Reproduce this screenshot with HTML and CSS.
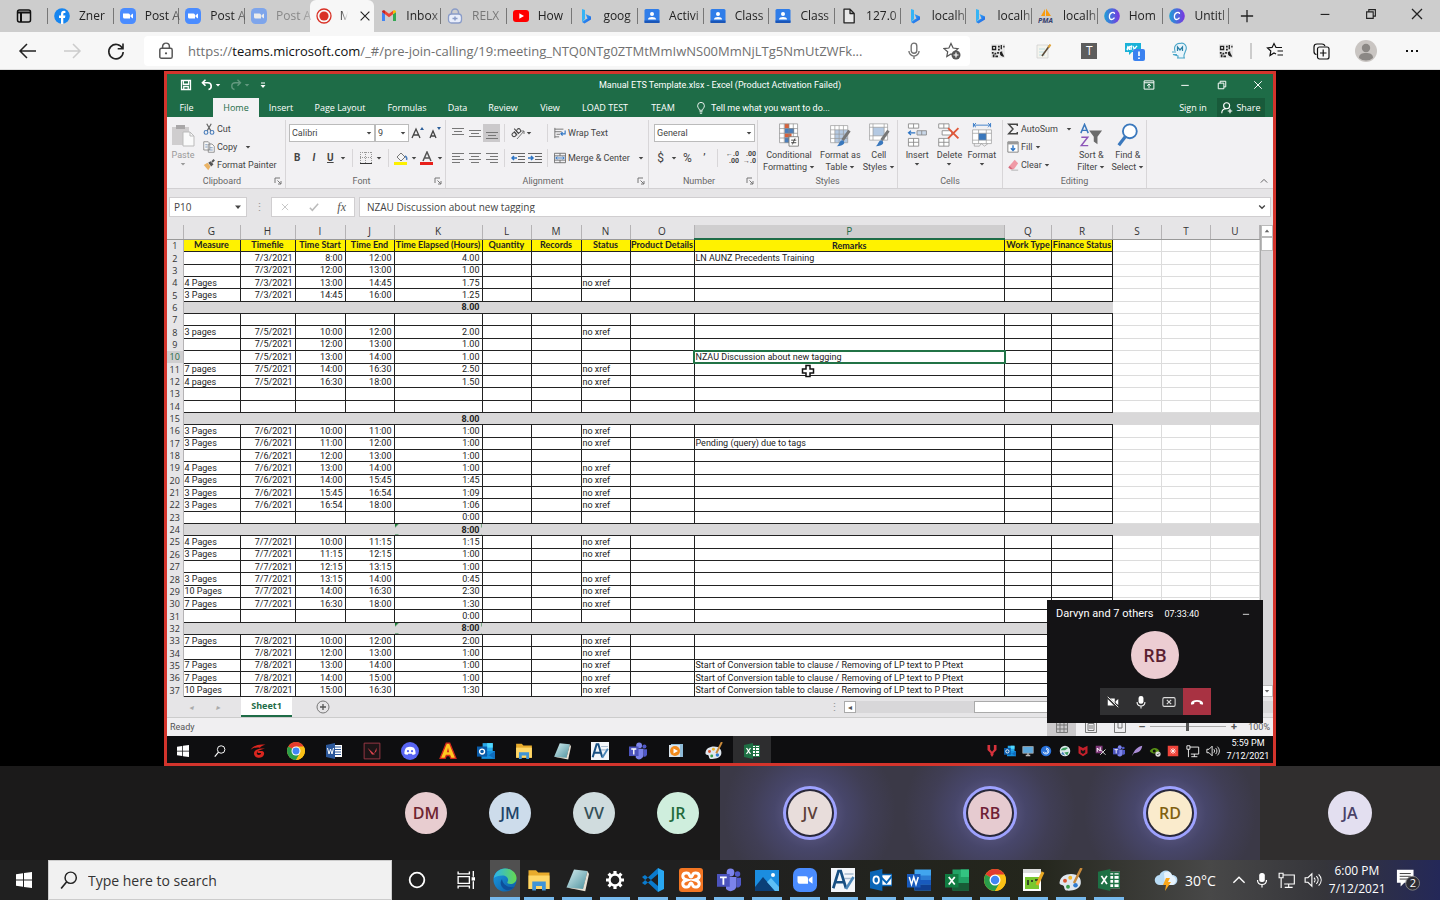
FILE: index.html
```html
<!DOCTYPE html>
<html lang="en">
<head>
<meta charset="utf-8">
<title>Meeting</title>
<link rel="stylesheet" href="styles.css">
</head>
<body>
<svg class="defs" aria-hidden="true">
  <defs>
    <linearGradient id="gEdge" x1="0" y1="0" x2="1" y2="1"><stop offset="0" stop-color="#1b9de2"/><stop offset="1" stop-color="#0c59a4"/></linearGradient>
    <linearGradient id="gEdge2" x1="0" y1="0" x2="1" y2="0"><stop offset="0" stop-color="#2bb3ee"/><stop offset="1" stop-color="#66d94e"/></linearGradient>
    <linearGradient id="gCanva" x1="0" y1="0" x2="1" y2="0"><stop offset="0" stop-color="#1f9fd6"/><stop offset="1" stop-color="#7a35e0"/></linearGradient>
    <linearGradient id="gBing" x1="0" y1="0" x2="1" y2="1"><stop offset="0" stop-color="#37bdff"/><stop offset="1" stop-color="#1b55e0"/></linearGradient>
    <linearGradient id="gPad" x1="0" y1="0" x2="1" y2="1"><stop offset="0" stop-color="#d8f0f2"/><stop offset="1" stop-color="#4a8f9c"/></linearGradient>
  </defs>
  <symbol id="tabpanel" viewBox="0 0 16 16"><rect x="1.5" y="2" width="13" height="12" rx="2" fill="none" stroke="#111" stroke-width="1.5"/><path d="M1.500 4.500h13M5 4.500V14" stroke="#111" stroke-width="2"/></symbol>
  <symbol id="fb" viewBox="0 0 16 16"><circle cx="8" cy="8" r="7.800" fill="#1685f0"/><path d="M7 16V10H5V7.600h2V6c0-2.200 1.200-3.200 3-3.200l1.400.1v2.200h-1c-.9 0-1.100.4-1.100 1.100v1.400h2.100L11 10H9.300v6z" fill="#fff"/></symbol>
  <symbol id="zoom" viewBox="0 0 16 16"><rect width="16" height="16" rx="4.500" fill="#4a8cff"/><path d="M3 5.500h5.500a1.500 1.500 0 0 1 1.500 1.500v3.500H4.500A1.500 1.500 0 0 1 3 9zM10.500 7.300 13 5.500v5l-2.500-1.800z" fill="#fff"/></symbol>
  <symbol id="rec" viewBox="0 0 16 16"><circle cx="8" cy="8" r="7" fill="none" stroke="#d93025" stroke-width="1.300"/><circle cx="8" cy="8" r="4.600" fill="#d93025"/></symbol>
  <symbol id="gmail" viewBox="0 0 16 16"><path d="M1 13V4l3 2.200V13z" fill="#4285f4"/><path d="M12 13V6.200L15 4v9z" fill="#34a853"/><path d="M4 6.200 8 9.200l4-3v-3.500L8 5.700 4 2.700z" fill="#ea4335"/><path d="M1 4c0-1.800 1.800-2.200 3-1.300v3.500z" fill="#c5221f"/><path d="M15 4c0-1.800-1.800-2.200-3-1.300v3.500z" fill="#fbbc04"/></symbol>
  <symbol id="relx" viewBox="0 0 16 16"><rect x="1.500" y="6" width="13" height="9" rx="3" fill="#e9eefb" stroke="#8a9cc8" stroke-width="1.300"/><path d="M4.500 6V4.500a3.500 3.500 0 0 1 7 0V6" fill="none" stroke="#8a9cc8" stroke-width="1.500"/><path d="M8 8.500v4M5.500 10.500h5" stroke="#8a9cc8" stroke-width="1.500"/></symbol>
  <symbol id="yt" viewBox="0 0 16 16"><rect y="2" width="16" height="12" rx="3" fill="#f00"/><path d="M6.300 5.200v5.600L11 8z" fill="#fff"/></symbol>
  <symbol id="bing" viewBox="0 0 16 16"><path d="M4 1l3 1v9l-3 3z" fill="#35b4f5"/><path d="M7.500 6 13 8.500v3L6.500 15.500 4 14l3.500-2.500 2-1z" fill="url(#gBing)"/></symbol>
  <symbol id="gclass" viewBox="0 0 16 16"><rect x=".5" y="1" width="15" height="14" rx="1.500" fill="#2f7de9"/><path d="M.5 12.500h15V15H.5z" fill="#1a56b8"/><circle cx="8" cy="6" r="2" fill="#fff"/><path d="M4 11.500c0-2 2-2.600 4-2.600s4 .6 4 2.600z" fill="#fff"/></symbol>
  <symbol id="page" viewBox="0 0 16 16"><path d="M3 1.200h6l4.200 4.200v9.400H3zM9 1.200v4.300h4.200" fill="#e8e8e8" stroke="#222" stroke-width="1.300" stroke-linejoin="round"/></symbol>
  <symbol id="canva" viewBox="0 0 16 16"><circle cx="8" cy="8" r="7.800" fill="url(#gCanva)"/><path d="M10.500 6c0-1.200-1-1.900-2.200-1.500C6.500 5 5.300 7 5.400 9c.1 1.600 1 2.500 2.200 2.500 1.300 0 2.200-.8 2.900-1.800" fill="none" stroke="#fff" stroke-width="1.300"/></symbol>
  <symbol id="x" viewBox="0 0 16 16"><path d="M3 3l10 10M13 3 3 13" stroke="currentColor" stroke-width="1.300" fill="none"/></symbol>
  <symbol id="plus" viewBox="0 0 16 16"><path d="M8 1v14M1 8h14" stroke="currentColor" stroke-width="1.500"/></symbol>
  <symbol id="min" viewBox="0 0 16 16"><path d="M3 8.500h10" stroke="currentColor" stroke-width="1.300"/></symbol>
  <symbol id="max" viewBox="0 0 16 16"><path d="M3 5.500h7.500V13H3zM5.500 5.500V3H13v7.500h-2.500" fill="none" stroke="currentColor" stroke-width="1.300"/></symbol>
  <symbol id="back" viewBox="0 0 20 20"><path d="M9 3 2 10l7 7M2 10h16" fill="none" stroke="currentColor" stroke-width="1.500"/></symbol>
  <symbol id="fwd" viewBox="0 0 20 20"><path d="m11 3 7 7-7 7M18 10H2" fill="none" stroke="currentColor" stroke-width="1.500"/></symbol>
  <symbol id="reload" viewBox="0 0 20 20"><path d="M16.500 7.500a7.200 7.200 0 1 0 .7 3.500M17 2.500v5.300h-5.300" fill="none" stroke="#222" stroke-width="1.600"/></symbol>
  <symbol id="lock" viewBox="0 0 16 16"><rect x="2.500" y="5.500" width="11" height="9" rx="1.500" fill="none" stroke="#555" stroke-width="1.300"/><path d="M5 5.500V4a3 3 0 0 1 6 0v1.500" fill="none" stroke="#555" stroke-width="1.300"/><circle cx="8" cy="10" r="1" fill="#555"/></symbol>
  <symbol id="mic" viewBox="0 0 16 16"><rect x="5.500" y="1" width="5" height="9" rx="2.500" fill="none" stroke="currentColor" stroke-width="1.200"/><path d="M3.500 8a4.500 4.500 0 0 0 9 0M8 12.500V15" fill="none" stroke="currentColor" stroke-width="1.200"/></symbol>
  <symbol id="staradd" viewBox="0 0 18 18"><path d="m8 1.500 2.100 4.500 4.900.6-3.600 3.300L12 14 8 12l-4.200 2.500.9-4.800L1 6.600l4.900-.6z" fill="none" stroke="#555" stroke-width="1.200"/><circle cx="13" cy="13" r="4.500" fill="#555"/><path d="M13 10.500v5M10.500 13h5" stroke="#fff" stroke-width="1.200"/></symbol>
  <symbol id="qr" viewBox="0 0 16 16"><rect width="16" height="16" fill="#e9e9e9"/><path d="M1 2h5v5H1zM8 2h2v2H8zM11 1h1.500v5H11zM14 2h1.500v2H14zM8 5.500h2v2H8zM1 9h2v2H1zM4 10h2v2H4zM2 12h2v3H2zM5 13h3v2H5zM7 9h2v2H7z" fill="#222"/><path d="M2.500 3.500h2v2h-2z" fill="#eee"/><path d="M10 10c0 3 2 4.500 5 4.500 0-2-3-4.500-2-6-1.500 0-3 .5-3 1.500z" fill="#222"/></symbol>
  <symbol id="note" viewBox="0 0 16 16"><path d="M1 2h11v13H1z" fill="#f4f4ee" stroke="#ccc" stroke-width=".7"/><path d="M3 6h6M3 9h5M3 12h6" stroke="#b5dbe0" stroke-width=".9"/><path d="m14 2-8 11" stroke="#5b4b3a" stroke-width="1.600"/><path d="m14.500 1.500-2 3" stroke="#e3a53a" stroke-width="2"/></symbol>
  <symbol id="mask" viewBox="0 0 18 18"><path d="M4 9C2 3 7 1 9 1.500 13 0 17 4 14.500 9L13 13v3H7v-2L2 12.500h4M1 10h4M6 16h8" fill="#e9f5fb" stroke="#4ba6c9" stroke-width="1.100"/><path d="M6.500 9V5l2.500 3 2.500-3v4" fill="none" stroke="#2b7fa6" stroke-width="1.200"/></symbol>
  <symbol id="favs" viewBox="0 0 18 18"><path d="M10 12 8 11l-4 2.500.8-4.500L1.500 6l4.600-.6L8 1.500l2 4h6M11.500 9H17M11.500 13H17" fill="none" stroke="#111" stroke-width="1.200"/></symbol>
  <symbol id="coll" viewBox="0 0 18 18"><path d="M4.500 12.500A3 3 0 0 1 2 9.500V5c0-2 1-3 3-3h5c1.500 0 2.500.7 3 2" fill="none" stroke="#111" stroke-width="1.200"/><rect x="5.500" y="5" width="11.500" height="12" rx="2" fill="none" stroke="#111" stroke-width="1.200"/><path d="M11.200 7.500v7M8 11h6.500" stroke="#111" stroke-width="1.200"/></symbol>
  <symbol id="user" viewBox="0 0 22 22"><circle cx="11" cy="11" r="11" fill="#c9c5c2"/><circle cx="11" cy="8" r="4.200" fill="#8b8885"/><path d="M4 18c0-4 3-5 7-5s7 1 7 5a11 11 0 0 1-14 0z" fill="#8b8885"/></symbol>
  <symbol id="dots" viewBox="0 0 16 16"><path d="M2 8h2M7 8h2M12 8h2" stroke="#111" stroke-width="2"/></symbol>
  <symbol id="save" viewBox="0 0 16 16"><path d="M2 2h12v12H2zM4.500 2v5h7V2M5 14v-4h6v4" fill="none" stroke="#fff" stroke-width="1.700"/></symbol>
  <symbol id="undo" viewBox="0 0 16 16"><path d="M6 1 2 5l4 4M2.500 5H9c6 0 6 8 1 9" fill="none" stroke="currentColor" stroke-width="2.200"/></symbol>
  <symbol id="redo" viewBox="0 0 16 16"><path d="m10 1 4 4-4 4M13.500 5H7c-6 0-6 8-1 9" fill="none" stroke="currentColor" stroke-width="1.800"/></symbol>
  <symbol id="qat" viewBox="0 0 8 8"><path d="M2 2h4" stroke="#fff"/><path d="M1.500 4h5L4 7z" fill="#fff"/></symbol>
  <symbol id="caret" viewBox="0 0 8 8"><path d="M1 2.500h6L4 6z" fill="currentColor"/></symbol>
  <symbol id="ropt" viewBox="0 0 16 16"><path d="M1.500 2.500h13v11h-13zM1.500 5h13M8 12V7M5.500 9 8 6.700 10.500 9" fill="none" stroke="currentColor" stroke-width="1.300"/></symbol>
  <symbol id="bulb" viewBox="0 0 16 16"><path d="M6 11C6 9 3.500 8 3.500 5a4.500 4.500 0 0 1 9 0c0 3-2.500 4-2.500 6zM6 13h4M6.500 15h3" fill="none" stroke="#fff" stroke-width="1.200"/></symbol>
  <symbol id="share" viewBox="0 0 16 16"><circle cx="7.500" cy="5" r="4" fill="none" stroke="#fff" stroke-width="1.500"/><path d="M1 15c0-4 3-6 6-6M12 9v6M9 12h6" fill="none" stroke="#fff" stroke-width="1.500"/></symbol>
  <symbol id="paste" viewBox="0 0 24 24"><path d="M1 4h17v18H1z" fill="#cfcdce"/><path d="M5 2h9v4H5z" fill="#a9a7a8"/><path d="M12 9h7l4 4v10H12z" fill="#fafafa" stroke="#bbb"/><path d="M19 9v4h4" fill="none" stroke="#bbb"/></symbol>
  <symbol id="cut" viewBox="0 0 16 16"><path d="m5 1 5.500 9.500M11 1 5.500 10.500" stroke="#666" stroke-width="1.600"/><circle cx="4" cy="12.500" r="2.500" fill="none" stroke="#4a7ebb" stroke-width="1.500"/><circle cx="12" cy="12.500" r="2.500" fill="none" stroke="#4a7ebb" stroke-width="1.500"/></symbol>
  <symbol id="copy" viewBox="0 0 16 16"><path d="M1 1h6l2 2v9H1zM7 4h5l3 3v8H7z" fill="#f8f8f8" stroke="#777"/><path d="M3 5h3M3 8h3M9 9h4M9 12h4" stroke="#5b7fae"/></symbol>
  <symbol id="brush" viewBox="0 0 16 16"><path d="m1 8 5-3 4 5-3 5z" fill="#eab365"/><path d="m7 5 3-2 4 4-3 3z" fill="#555"/><path d="m12 4 3-3" stroke="#555" stroke-width="2.500"/></symbol>
  <symbol id="launch" viewBox="0 0 8 8"><path d="M1 6V1h5M3.500 3.500 7 7M7 4v3H4" fill="none" stroke="#777"/></symbol>
  <symbol id="al-l" viewBox="0 0 12 12"><path d="M0 1.500h12M0 4.500h8M0 7.500h12M0 10.500h8" stroke="#777"/></symbol>
  <symbol id="al-c" viewBox="0 0 12 12"><path d="M0 1.500h12M2 4.500h8M0 7.500h12M2 10.500h8" stroke="#777"/></symbol>
  <symbol id="al-r" viewBox="0 0 12 12"><path d="M0 1.500h12M4 4.500h8M0 7.500h12M4 10.500h8" stroke="#777"/></symbol>
  <symbol id="v-t" viewBox="0 0 12 12"><path d="M0 1.500h12M2 4.500h8M0 7.500h12" stroke="#777"/></symbol>
  <symbol id="v-m" viewBox="0 0 12 12"><path d="M0 3.500h12M2 6.500h8M0 9.500h12" stroke="#777"/></symbol>
  <symbol id="v-b" viewBox="0 0 12 12"><path d="M0 5.500h12M2 8.500h8M0 11.500h12" stroke="#777"/></symbol>
  <symbol id="ind-o" viewBox="0 0 14 12"><path d="M0 1.500h14M7 4.500h7M7 7.500h7M0 10.500h14" stroke="#666"/><path d="M6 6H1M3 4 1 6l2 2" stroke="#2d74c4" stroke-width="1.500" fill="none"/></symbol>
  <symbol id="ind-i" viewBox="0 0 14 12"><path d="M0 1.500h14M7 4.500h7M7 7.500h7M0 10.500h14" stroke="#666"/><path d="M0 6h5M3 4l2 2-2 2" stroke="#2d74c4" stroke-width="1.500" fill="none"/></symbol>
  <symbol id="wrap" viewBox="0 0 14 12"><path d="M1 0v12M1 1.500h10M1 4.500h8M1 10.500h5M3 7.500h4" stroke="#666"/><path d="M13 3v4H8M10 5 8 7l2 2" fill="none" stroke="#2d74c4" stroke-width="1.300"/></symbol>
  <symbol id="merge" viewBox="0 0 14 12"><path d="M.5.500h13v11H.5zM.5 3.500h13M.5 8.500h13M7 .5v3M7 8.500v3" fill="none" stroke="#666"/><path d="M2 6h10M4 4.500 2 6l2 1.500M10 4.500 12 6l-2 1.500" fill="none" stroke="#2d74c4"/></symbol>
  <symbol id="borders" viewBox="0 0 12 12"><path d="M0 .5h12M0 5.500h12M.5 0v12M5.500 0v12M11.500 0v12" stroke="#999" stroke-dasharray="1 1"/><path d="M0 11.500h12" stroke="#333"/></symbol>
  <symbol id="bucket" viewBox="0 0 14 14"><path d="m3 6 4-4 4 4-4 4z" fill="#f5f5f5" stroke="#777"/><path d="M11 5c2 1 2 3 1.500 4" stroke="#4a7ebb" fill="none" stroke-width="1.500"/><path d="M0 11h13v3H0z" fill="#fdf000"/></symbol>
  <symbol id="fontcol" viewBox="0 0 14 14"><path d="m3 10 4-9 4 9M4.500 7h5" fill="none" stroke="#555" stroke-width="1.500"/><path d="M0 11h13v3H0z" fill="#e8201a"/></symbol>
  <symbol id="cond" viewBox="0 0 24 28"><path d="M1 1h21v22H1z" fill="#fff"/><path d="M7 1h5v5H7zM7 12h8v5H7z" fill="#d9623b"/><path d="M7 6h11v6H7zM7 17h5v6H7z" fill="#4a7ebb"/><path d="M1 1h21v22H1zM1 6.500h21M1 12h21M1 17.500h21M6.500 1v22M12 1v22M17 1v22" fill="none" stroke="#888" stroke-width=".8"/><path d="M12 16h11v11H12z" fill="#fff" stroke="#777"/><path d="M14.500 20h6M14.500 23h6M19 18l-3 7" stroke="#333"/></symbol>
  <symbol id="ftab" viewBox="0 0 24 28"><path d="M1 3h20v20H1z" fill="#fff"/><path d="M6 8h15v15H6z" fill="#b4c9e2"/><path d="M1 3h20v20H1zM1 8h20M1 13h20M1 18h20M6 3v20M11 3v20M16 3v20" fill="none" stroke="#999" stroke-width=".8"/><path d="m23 9-8 11" stroke="#777" stroke-width="3.500"/><path d="M8 27c3-1 3-7 7-7 4 2 2 7-7 7z" fill="#3a78bd"/></symbol>
  <symbol id="cstyle" viewBox="0 0 24 28"><path d="M1 1h21v19H1z" fill="#fff"/><path d="M5 5h13v10H5z" fill="#b4c9e2"/><path d="M1 1h21v19H1zM5 1v19M18 1v19M1 5h21M1 15h21" fill="none" stroke="#999" stroke-width=".8"/><path d="m23 9-8 11" stroke="#777" stroke-width="3.500"/><path d="M8 27c3-1 3-7 7-7 4 2 2 7-7 7z" fill="#3a78bd"/></symbol>
  <symbol id="cins" viewBox="0 0 24 28"><path d="M2 1h12v5H2zM8 1v5M2 18h12v9H2zM2 22.500h12M8 18v9" fill="#fff" stroke="#888"/><path d="M12 9h11v5H12zM17.500 9v5" fill="#c9d7e8" stroke="#888"/><path d="M10 11.500H2M5 9l-3 2.500L5 14" fill="none" stroke="#2d74c4" stroke-width="1.300"/></symbol>
  <symbol id="cdel" viewBox="0 0 26 28"><path d="M1 1h12v5H1zM7 1v5M5 9h11v5H5zM1 18h12v9H1zM1 22.500h12M7 18v9" fill="#fff" stroke="#888"/><path d="m12 6 12 12M24 6 12 18" stroke="#e0583a" stroke-width="2.200"/></symbol>
  <symbol id="cfmt" viewBox="0 0 24 28"><path d="M2 2.500h20M2 0v5M22 0v5M5 0 2.500 2.500 5 5M19 0l2.500 2.500L19 5" fill="none" stroke="#2d74c4"/><path d="M1 8h22v16H1z" fill="#fff"/><path d="M8 12h9v8H8z" fill="#3a78bd"/><path d="M1 8h22v16H1zM1 12h22M1 20h22M8 8v16M17 8v16M3 24v3h6l2-3 4 3 4-3" fill="none" stroke="#999" stroke-width=".8"/></symbol>
  <symbol id="sigma" viewBox="0 0 14 14"><path d="M12 3.500V1.500H2l5 5.500-5 5.500h10v-2" fill="none" stroke="#444" stroke-width="1.700"/></symbol>
  <symbol id="fill" viewBox="0 0 14 14"><path d="M1 1h12v12H1z" fill="#fff" stroke="#777"/><path d="M1 1h12v3H1z" fill="#999"/><path d="M7 5v6M4.500 8.500 7 11l2.500-2.500" fill="none" stroke="#2d74c4" stroke-width="1.600"/></symbol>
  <symbol id="eraser" viewBox="0 0 14 14"><path d="m3 8 6-7 4 4-5 7H5z" fill="#f09aa6"/><path d="m3 8 4 4H4L1.500 10z" fill="#d76a7c"/><path d="M5 13h8" stroke="#aaa"/></symbol>
  <symbol id="find" viewBox="0 0 24 26"><circle cx="14" cy="9" r="7.500" fill="#fff" stroke="#3a78bd" stroke-width="2"/><path d="m9 15-7 9" stroke="#3a78bd" stroke-width="3.500"/></symbol>
  <symbol id="up" viewBox="0 0 10 10"><path d="M1 7 5 3l4 4" fill="none" stroke="currentColor" stroke-width="1"/></symbol>
  <symbol id="down" viewBox="0 0 10 10"><path d="M1.500 3 5 6.500 8.500 3" fill="none" stroke="currentColor" stroke-width="1.700"/></symbol>
  <symbol id="check" viewBox="0 0 12 12"><path d="m1 7 3 3 7-8" fill="none" stroke="#bbb" stroke-width="1.800"/></symbol>
  <symbol id="addc" viewBox="0 0 14 14"><circle cx="7" cy="7" r="6" fill="none" stroke="#777"/><path d="M7 4v6M4 7h6" stroke="#555" stroke-width="1.300"/></symbol>
  <symbol id="cross" viewBox="0 0 14 14"><path d="M5 1.500h4v3.500h3.500v4H9v3.500H5V9H1.500V5H5z" fill="#fff" stroke="#111" stroke-width="1.500"/></symbol>
  <symbol id="vgrid" viewBox="0 0 12 12"><path d="M.5.500h11v11H.5zM.5 4h11M.5 8h11M4 .5v11M8 .5v11" fill="none" stroke="#777"/></symbol>
  <symbol id="vpage" viewBox="0 0 12 12"><path d="M.5.500h11v11H.5zM3 2.500h6v7H3zM4 5h4M4 7h4" fill="none" stroke="#777"/></symbol>
  <symbol id="vbreak" viewBox="0 0 12 12"><path d="M.5.500h11v11H.5zM4 .5V7h4V.5" fill="none" stroke="#777"/></symbol>
  <symbol id="win" viewBox="0 0 16 16"><path d="m0 2.200 7-1v6.300H0zM8 1l8-1v7.500H8zM0 8.500h7v6.300l-7-1zM8 8.500h8V16l-8-1.100z" fill="#fff"/></symbol>
  <symbol id="search" viewBox="0 0 16 16"><circle cx="9.500" cy="6" r="5" fill="none" stroke="currentColor" stroke-width="1.300"/><path d="m6 9.500-5 6" stroke="currentColor" stroke-width="1.500"/></symbol>
  <symbol id="garena" viewBox="0 0 16 16"><path d="M.5 7C3 3 8 .8 15.500 1.800 12.500 2.600 11 3.500 10 4.800 6 4 3 5 .5 7z" fill="#d9261f"/><path d="M15 5.500C9 5 4 6.500 4 10.500c0 5 8.500 6 10 1 .5-2-.5-3.500-2-3.500H8l-.5 2H11c.5 2-3.800 2.800-4.200.5C6.500 8 10 6.800 15 5.500z" fill="#d9261f"/></symbol>
  <symbol id="chrome" viewBox="0 0 16 16"><circle cx="8" cy="8" r="8" fill="#fbc116"/><path d="M8 8 1.100 4A8 8 0 0 1 14.900 4z" fill="#e33b2e"/><path d="M8 8 1.100 4A8 8 0 0 0 8 16l3-5z" fill="#2a9d4a"/><path d="M8 4h6.900A8 8 0 0 1 8 16l3.500-6z" fill="#fbc116"/><circle cx="8" cy="8" r="4" fill="#fff"/><circle cx="8" cy="8" r="3.100" fill="#4285f4"/></symbol>
  <symbol id="word" viewBox="0 0 16 16"><path d="M5 1h11v14H5z" fill="#41a5ee"/><path d="M5 5h11v3H5z" fill="#2b7cd3"/><path d="M5 8h11v3H5z" fill="#185abd"/><path d="M5 11h11v4H5z" fill="#103f91"/><path d="M0 4h9v9H0z" fill="#185abd"/><path d="m1.500 6 1.500 5 1.500-5L6 11l1.500-5" fill="none" stroke="#fff"/></symbol>
  <symbol id="word13" viewBox="0 0 16 16"><path d="M8 2h8v12H8z" fill="#fff"/><path d="M9 4h6M9 6.500h6M9 9h6M9 11.500h6" stroke="#2b579a"/><path d="m0 2 9-2v16l-9-2z" fill="#2b579a"/><path d="m1.500 5 1.500 6 1.500-5L6 11l1.500-6" fill="none" stroke="#fff"/></symbol>
  <symbol id="excel" viewBox="0 0 16 16"><path d="M5 1h11v14H5z" fill="#21a366"/><path d="M10.500 1H16v5h-5.500z" fill="#33c481"/><path d="M5 10h11v5H5z" fill="#185c37"/><path d="M0 4h9v9H0z" fill="#107c41"/><path d="m2.500 6 4 5M6.500 6l-4 5" stroke="#fff" stroke-width="1.200"/></symbol>
  <symbol id="excel13" viewBox="0 0 16 16"><path d="M8 2h8v12H8z" fill="#fff"/><path d="M8 4.500h8M8 7.500h8M8 10.500h8M11.500 2v12M15.500 2v12M8 2.500h8M8 13.500h8" stroke="#217346"/><path d="m0 2 9-2v16l-9-2z" fill="#1d7044"/><path d="m2.500 5 4 6M6.500 5l-4 6" stroke="#fff" stroke-width="1.300"/></symbol>
  <symbol id="outlook" viewBox="0 0 16 16"><path d="M5 1h9v8H5z" fill="#28a8ea"/><path d="M9 1h5v4H9z" fill="#50d9ff"/><path d="M4 8h12v7H4z" fill="#1490df"/><path d="m4 8 6 4 6-4v7z" fill="#0f6cbd"/><path d="M0 4h9v9H0z" fill="#0a5ba8"/><circle cx="4.500" cy="8.500" r="2.200" fill="none" stroke="#fff" stroke-width="1.200"/></symbol>
  <symbol id="outlook13" viewBox="0 0 16 16"><path d="M8 4h8v8H8z" fill="#fff" stroke="#0a66b7"/><path d="m8 6 4 4 4-5" fill="none" stroke="#0a66b7" stroke-width="1.400"/><path d="m0 2 9-2v16l-9-2z" fill="#0a66b7"/><ellipse cx="4.500" cy="8" rx="2" ry="2.600" fill="none" stroke="#fff" stroke-width="1.300"/></symbol>
  <symbol id="teams" viewBox="0 0 16 16"><circle cx="9" cy="3" r="2.600" fill="#7b83eb"/><circle cx="13.700" cy="4" r="1.800" fill="#5059c9"/><path d="M6 6h7v5a4 4 0 0 1-7 3z" fill="#7b83eb"/><path d="M13 6.500h3V11a2.500 2.500 0 0 1-3 2z" fill="#5059c9"/><path d="M0 4h8.500v8.500H0z" fill="#4b53bc"/><path d="M2 6.200h4.500M4.250 6.200v5" stroke="#fff" stroke-width="1.200"/></symbol>
  <symbol id="valo" viewBox="0 0 16 16"><path d="M1 1h14v14H1z" fill="#1c1416" stroke="#a23b47" stroke-width=".8"/><path d="m4 5 4 6h2.500zM12 5v3l-2.300 2.600z" fill="#e0454f"/></symbol>
  <symbol id="discord" viewBox="0 0 16 16"><circle cx="8" cy="8" r="8" fill="#5865f2"/><path d="M4.500 5C7 4 9 4 11.500 5c1.200 2 1.500 3.500 1.500 5.500-1 .8-2 1-2.700 1l-.6-1H6.300l-.6 1c-.7 0-1.700-.2-2.700-1C3 8.500 3.300 7 4.500 5z" fill="#fff"/><circle cx="6.200" cy="8.200" r="1" fill="#5865f2"/><circle cx="9.800" cy="8.200" r="1" fill="#5865f2"/></symbol>
  <symbol id="flameA" viewBox="0 0 16 16"><path d="M6.500 1h3L15 14.500h-4.500L9.500 12h-3l-1 2.500H1z" fill="#ffc720" stroke="#d4271c" stroke-width="1.200"/><path d="m8 5 1 4H7z" fill="#d4271c"/></symbol>
  <symbol id="folder" viewBox="0 0 16 16"><path d="M1 1.500h5l1.500 1.500H15v11H1z" fill="#e8ab2c"/><path d="M1 5h14v9H1z" fill="#ffd767"/><path d="M3.500 15V9h9v6h-2.500v-3H6v3z" fill="#3f94d6"/></symbol>
  <symbol id="notepad" viewBox="0 0 16 16"><path d="m6 1 9 1-3 12.500L1 13z" fill="url(#gPad)"/><path d="m15 2 1 2-2.500 11.500L1 13l11 1z" fill="#e8e2d5"/></symbol>
  <symbol id="wordpad" viewBox="0 0 16 16"><path d="M0 0h16v16H0z" fill="#f3f6fa"/><path d="M9 4h6M9 7h6" stroke="#a9bcd0"/><path d="M1.500 13.500 5 2h1.500l3.500 11.500M3 9.500h5.500" fill="none" stroke="#174f82" stroke-width="1.800"/><path d="m15 6-5 8" stroke="#4b86b8" stroke-width="1.700"/></symbol>
  <symbol id="player" viewBox="0 0 16 16"><path d="M3 1h12v13H3z" fill="#8fbbd8"/><path d="M1 2h11v12H1z" fill="#d9e4ec"/><circle cx="7" cy="8" r="5" fill="#f28a1c"/><path d="M5.500 5.500v5L10 8z" fill="#fff"/></symbol>
  <symbol id="paint" viewBox="0 0 16 16"><path d="M8 4c5 0 7 3 6.500 6.500C14 14 9 15.500 5 15c-2-.3-1-3-2.500-3.500S0 11 .5 9C1 6 4 4 8 4z" fill="#dfe7ef"/><circle cx="4" cy="8.500" r="1.300" fill="#d9542e"/><circle cx="7.500" cy="6.500" r="1.300" fill="#efb52a"/><circle cx="6" cy="12.500" r="1.300" fill="#3b9e4c"/><circle cx="11" cy="11.500" r="1.500" fill="#2f7bd0"/><path d="m15 0-5 10" stroke="#c98a3a" stroke-width="1.700"/></symbol>
  <symbol id="t-v" viewBox="0 0 16 16"><path d="M2 0h3.500v6L8 9l2.500-3V0H14v6.500l-4 4V13l-2 3-2-3v-2.500l-4-4z" fill="#d8323c"/></symbol>
  <symbol id="t-mon" viewBox="0 0 16 16"><path d="M1 2h14v9H1z" fill="#5ea9dd" stroke="#aaa"/><path d="M5 14h6M8 11v3" stroke="#bbb" stroke-width="2"/></symbol>
  <symbol id="t-swirl" viewBox="0 0 16 16"><circle cx="8" cy="8" r="7" fill="#2870d8"/><path d="M4 9a4 4 0 1 0 4-5M6 9a2.300 2.300 0 1 0 2-3" fill="none" stroke="#d7e8ff" stroke-width="1.300"/></symbol>
  <symbol id="t-globe" viewBox="0 0 16 16"><circle cx="8" cy="8" r="7" fill="#dce7ea"/><path d="M2 7c3-4 7-4 10-3l-4 3zM7 10l6-1-2 5z" fill="#3c9e5f"/><path d="M5 9l3 5-5-2z" fill="#3e77b8"/></symbol>
  <symbol id="t-mcafee" viewBox="0 0 16 16"><path d="m2 1 6 3 6-3v10l-6 4-6-4z" fill="#c5202b"/><path d="M5 10V6l3 2 3-2v4l-3 2z" fill="#151515"/></symbol>
  <symbol id="t-snip" viewBox="0 0 16 16"><path d="M1 1h9v10H1z" fill="#80397b"/><path d="M3 9V4l4 4V3" stroke="#fff" fill="none" stroke-width="1.300"/><path d="m7 6 7 7M14 6l-7 7" stroke="#ddd" stroke-width="1.300"/></symbol>
  <symbol id="t-pen" viewBox="0 0 16 16"><path d="M1 15C5 6 8 3 15 1c-1 7-5 9-11 10z" fill="#a98bd6"/></symbol>
  <symbol id="t-nv" viewBox="0 0 16 16"><path d="M1 8c4-6 10-5 13 0-3 4-9 5-13 0z" fill="#5a9416"/><circle cx="7" cy="8" r="2" fill="#111"/><circle cx="12" cy="12" r="3.500" fill="#ddd"/><path d="m10.500 12 1.200 1.200 2-2.200" stroke="#222" fill="none"/></symbol>
  <symbol id="t-ad" viewBox="0 0 16 16"><path d="M1 1h14v14H1z" fill="#ef443b"/><path d="M8 4v8M4 8h8M5 5l6 6M11 5l-6 6" stroke="#fff"/></symbol>
  <symbol id="net" viewBox="0 0 16 16"><path d="M4.500 3.500h10v8h-9M9.500 11.500v3M6 14.500h7" fill="none" stroke="#fff" stroke-width="1"/><path d="M1 2h3.500v4H1zM2.800 6v9" fill="none" stroke="#fff" stroke-width="1"/></symbol>
  <symbol id="spk" viewBox="0 0 16 16"><path d="M1 6h2.500L7 2.500v11L3.500 10H1zM9 6c1 1 1 3 0 4M11 4.500c2 2 2 5 0 7M13 3c3 3 3 7 0 10" fill="none" stroke="#fff" stroke-width="1"/></symbol>
  <symbol id="camoff" viewBox="0 0 16 16"><path d="M2 4h8v8H2zM11 7l3-2.500v7L11 9z" fill="#fff"/><path d="m1 2 13 13" stroke="#333" stroke-width="2.500"/><path d="m2 2 12 12" stroke="#fff"/></symbol>
  <symbol id="micf" viewBox="0 0 16 16"><rect x="5.200" y="1" width="5.600" height="9" rx="2.500" fill="#fff"/><path d="M3.500 8c0 6 9 6 9 0M8 12.500V15.500" fill="none" stroke="#fff" stroke-width="1.200"/></symbol>
  <symbol id="stopsh" viewBox="0 0 16 16"><rect x="1" y="3" width="14" height="10" rx="1.500" fill="none" stroke="#ddd" stroke-width="1.200"/><path d="m5.500 5.500 5 5M10.500 5.500l-5 5" stroke="#ddd" stroke-width="1.300"/></symbol>
  <symbol id="hang" viewBox="0 0 16 16"><path d="M1 9.500C2 4.500 14 4.500 15 9.500l-.5 1.500-3.200-.7-.3-2c-2-.8-4-.8-6 0l-.3 2L1.500 11z" fill="#fff"/></symbol>
  <symbol id="ring" viewBox="0 0 16 16"><circle cx="8" cy="8" r="6.500" fill="none" stroke="#fff" stroke-width="1.600"/></symbol>
  <symbol id="tview" viewBox="0 0 16 16"><path d="M1 .5v2h10v-2M1 15.500v-2h10v2M1 5h10v6H1zM14.500 0v5M14.500 9v7" fill="none" stroke="#fff" stroke-width="1.200"/><path d="M13 5.500h3v3h-3z" fill="#fff"/></symbol>
  <symbol id="edge" viewBox="0 0 24 24"><circle cx="12" cy="12" r="11.500" fill="url(#gEdge)"/><path d="M.8 10C2 4 7 .5 12 .5c7 0 11.500 5 11.500 9.500 0 4-3 6-6 6-2.500 0-3.700-1-3-2 2-3-1-6.500-5-6.500-4 0-7 1-8.700 2.500z" fill="url(#gEdge2)"/><path d="M9 11c-3 4-1 9 4 11 3 .5 6-.5 8.500-3-5 1.500-12-2-12.500-8z" fill="#0e4f9b"/></symbol>
  <symbol id="gear" viewBox="0 0 20 20"><circle cx="10" cy="10" r="5.500" fill="none" stroke="#fff" stroke-width="2.400"/><path d="M10 1v3M10 16v3M1 10h3M16 10h3M3.600 3.600l2.200 2.200M14.200 14.200l2.200 2.200M16.400 3.600l-2.200 2.200M5.800 14.200l-2.200 2.200" stroke="#fff" stroke-width="3.200"/></symbol>
  <symbol id="vscode" viewBox="0 0 24 24"><path d="m17 0 6 3v18l-6 3z" fill="#29a8f2"/><path d="M17 6 4 17l-3-2L17 0zM17 18 4 7 1 9l16 15z" fill="#0a7bcd"/></symbol>
  <symbol id="xampp" viewBox="0 0 24 24"><rect width="24" height="24" rx="3" fill="#f37623"/><path d="M8 12c-7-2-4-8 0-7 3 0 2 4 4 4s1-4 4-4c4-1 7 5 0 7 7 2 4 8 0 7-3 0-2-4-4-4s-1 4-4 4c-4 1-7-5 0-7z" fill="none" stroke="#fff" stroke-width="3"/></symbol>
  <symbol id="photos" viewBox="0 0 24 24"><path d="M0 2h24v21H0z" fill="#1b8de0"/><path d="M0 19 8 9l12 14H0z" fill="#0b3f78"/><path d="m12 14 4-4 8 9v4h-4z" fill="#5ebff5"/><circle cx="18" cy="7" r="2" fill="#fff"/></symbol>
  <symbol id="npp" viewBox="0 0 24 24"><path d="M2 3h18v20H2z" fill="#fff"/><path d="M4 9h14v12H4z" fill="#78c62e"/><path d="M2 1h18v4H2z" fill="#ddd"/><path d="M7 12v5M10 13h2M14 12h3" stroke="#222" stroke-width="1.500"/><path d="m22 4-6 13" stroke="#e8a823" stroke-width="3"/></symbol>
  <symbol id="storm" viewBox="0 0 24 24"><path d="M6 17a5 5 0 0 1-.5-10C8 1 16 1 18 7c7 0 7 9 1 10z" fill="#b9dcf6"/><path d="M10 5c4-3 8 0 8 3 5 1 5 7 1 9h-8z" fill="#e8f3fc"/><path d="m12 10-3 7h3l-1 6 6-9h-3l2-4z" fill="#f9a61a"/></symbol>
</svg>

<header class="tabs">
  <button class="tabs-menu" aria-label="Tab actions"><svg class="i16"><use href="#tabpanel"/></svg></button>
  <nav class="tablist">
    <button class="tab"><svg class="i16"><use href="#fb"/></svg><span>Zner</span></button>
    <button class="tab"><svg class="i16"><use href="#zoom"/></svg><span>Post A</span></button>
    <button class="tab"><svg class="i16"><use href="#zoom"/></svg><span>Post A</span></button>
    <button class="tab dim"><svg class="i16"><use href="#zoom"/></svg><span>Post A</span></button>
    <button class="tab active"><svg class="i16"><use href="#rec"/></svg><span>M</span><svg class="i14"><use href="#x"/></svg></button>
    <button class="tab"><svg class="i16"><use href="#gmail"/></svg><span>Inbox</span></button>
    <button class="tab"><svg class="i16"><use href="#relx"/></svg><span class="soft">RELX</span></button>
    <button class="tab"><svg class="i16"><use href="#yt"/></svg><span>How</span></button>
    <button class="tab"><svg class="i16"><use href="#bing"/></svg><span>goog</span></button>
    <button class="tab"><svg class="i16"><use href="#gclass"/></svg><span>Activi</span></button>
    <button class="tab"><svg class="i16"><use href="#gclass"/></svg><span>Class</span></button>
    <button class="tab"><svg class="i16"><use href="#gclass"/></svg><span>Class</span></button>
    <button class="tab"><svg class="i16"><use href="#page"/></svg><span>127.0</span></button>
    <button class="tab"><svg class="i16"><use href="#bing"/></svg><span>localh</span></button>
    <button class="tab"><svg class="i16"><use href="#bing"/></svg><span>localh</span></button>
    <button class="tab"><svg class="i16" viewBox="0 0 16 16"><path d="M7 1v7H3zM8 .5 13 8H8z" fill="#f89c0e"/><text x="0" y="15" class="pma">PMA</text></svg><span>localh</span></button>
    <button class="tab"><svg class="i16"><use href="#canva"/></svg><span>Hom</span></button>
    <button class="tab"><svg class="i16"><use href="#canva"/></svg><span>Untitl</span></button>
  </nav>
  <button class="newtab" aria-label="New tab"><svg class="i14"><use href="#plus"/></svg></button>
  <div class="winctl">
    <button aria-label="Minimize"><svg class="i14"><use href="#min"/></svg></button>
    <button aria-label="Restore"><svg class="i14"><use href="#max"/></svg></button>
    <button aria-label="Close"><svg class="i16"><use href="#x"/></svg></button>
  </div>
</header>

<div class="toolbar">
  <div class="navbtns">
    <button aria-label="Back"><svg class="i20"><use href="#back"/></svg></button>
    <button class="off" aria-label="Forward"><svg class="i20"><use href="#fwd"/></svg></button>
    <button aria-label="Reload"><svg class="i20"><use href="#reload"/></svg></button>
  </div>
  <div class="url">
    <svg class="i18"><use href="#lock"/></svg>
    <p class="address">https://<b>teams.microsoft.com</b>/_#/pre-join-calling/19:meeting_NTQ0NTg0ZTMtMmIwNS00MmNjLTg5NmUtZWFk...</p>
    <button aria-label="Voice search"><svg class="i18"><use href="#mic"/></svg></button>
    <button aria-label="Add favorite"><svg class="i18"><use href="#staradd"/></svg></button>
  </div>
  <div class="ext">
    <button aria-label="QR"><svg class="i14"><use href="#qr"/></svg></button>
    <button aria-label="Notes"><svg class="i16"><use href="#note"/></svg></button>
    <button><span class="tbox">T</span></button>
    <button aria-label="My"><svg class="i22" viewBox="0 0 22 20"><path d="M1 2h16v9H8l-3 3v-3H1z" fill="#1ab2d8"/><path d="m3 9 1-4v3l2-3-.5 4M5.500 6l2-1-.5 4M9 5l1 3 3-3-4 5" fill="none" stroke="#fff" stroke-width="1.200"/><rect x="9" y="8" width="12" height="12" rx="2" fill="#3b82f0"/><path d="M15 10.500v4.500M15 16.500v1.500" stroke="#fff" stroke-width="1.700"/></svg></button>
    <button aria-label="Mask"><svg class="i18"><use href="#mask"/></svg></button>
    <button aria-label="QR code"><svg class="i14"><use href="#qr"/></svg></button>
    <i class="vbar"></i>
    <button aria-label="Favorites"><svg class="i18"><use href="#favs"/></svg></button>
    <button aria-label="Collections"><svg class="i18"><use href="#coll"/></svg></button>
    <button aria-label="Profile"><svg class="i22"><use href="#user"/></svg></button>
    <button aria-label="More"><svg class="i16"><use href="#dots"/></svg></button>
  </div>
</div>

<main class="stage">
  <section class="shared">
    <div class="xl-title">
      <div class="qat">
        <button aria-label="Save"><svg class="i12"><use href="#save"/></svg></button>
        <button aria-label="Undo"><svg class="i12"><use href="#undo"/></svg><svg class="i6"><use href="#caret"/></svg></button>
        <button class="faded" aria-label="Redo"><svg class="i12"><use href="#redo"/></svg><svg class="i6"><use href="#caret"/></svg></button>
        <button aria-label="Customize"><svg class="i8"><use href="#qat"/></svg></button>
      </div>
      <h1>Manual ETS Template.xlsx - Excel (Product Activation Failed)</h1>
      <div class="xl-ctl">
        <button aria-label="Ribbon options"><svg class="i12"><use href="#ropt"/></svg></button>
        <button aria-label="Minimize"><svg class="i12"><use href="#min"/></svg></button>
        <button aria-label="Restore"><svg class="i12"><use href="#max"/></svg></button>
        <button aria-label="Close"><svg class="i12"><use href="#x"/></svg></button>
      </div>
    </div>
    <nav class="xl-tabs">
      <button>File</button><button class="on">Home</button><button>Insert</button><button>Page Layout</button><button>Formulas</button><button>Data</button><button>Review</button><button>View</button><button>LOAD TEST</button><button>TEAM</button>
      <button class="tell"><svg class="i12"><use href="#bulb"/></svg>Tell me what you want to do...</button>
      <button class="sign">Sign in</button>
      <button class="share"><svg class="i12"><use href="#share"/></svg>Share</button>
    </nav>
    <div class="ribbon">
      <div class="group g-clip">
        <div class="gbody">
          <button class="big muted"><svg class="i24"><use href="#paste"/></svg>Paste<svg class="i6"><use href="#caret"/></svg></button>
          <div class="stack">
            <button><svg class="i12"><use href="#cut"/></svg>Cut</button>
            <button><svg class="i12"><use href="#copy"/></svg>Copy<svg class="i6 gapl"><use href="#caret"/></svg></button>
            <button><svg class="i12"><use href="#brush"/></svg>Format Painter</button>
          </div>
        </div>
        <div class="glabel"><span>Clipboard</span><svg class="i8"><use href="#launch"/></svg></div>
      </div>
      <div class="group g-font">
        <div class="gbody rows">
          <div class="line">
            <span class="combo fam"><select aria-label="Font"><option>Calibri</option></select><svg class="i6"><use href="#caret"/></svg></span><span class="combo size"><select aria-label="Font size"><option>9</option></select><svg class="i6"><use href="#caret"/></svg></span>
            <button class="c17" aria-label="Grow font"><svg class="i14" viewBox="0 0 14 14"><path d="M1 12 5 3l4 9M2.500 9h5" fill="none" stroke="#444" stroke-width="1.300"/><path d="m9 4 2-3 2 3z" fill="#2d5f9a"/></svg></button><button class="c17" aria-label="Shrink font"><svg class="i14" viewBox="0 0 14 14"><path d="m2 12 3-7 3 7M3 10h4" fill="none" stroke="#444" stroke-width="1.300"/><path d="m9 1 2 3 2-3z" fill="#2d5f9a"/></svg></button>
          </div>
          <div class="line">
            <button class="c17"><b>B</b></button><button class="c17"><b><em>I</em></b></button><button class="c17"><b><u>U</u></b></button><button class="c10" aria-label="Underline options"><svg class="i6"><use href="#caret"/></svg></button><i class="sep"></i>
            <button class="c17" aria-label="Borders"><svg class="i12"><use href="#borders"/></svg></button><button class="c10" aria-label="Border options"><svg class="i6"><use href="#caret"/></svg></button><i class="sep"></i>
            <button class="c17" aria-label="Fill color"><svg class="i14"><use href="#bucket"/></svg></button><button class="c10" aria-label="Fill options"><svg class="i6"><use href="#caret"/></svg></button><button class="c17" aria-label="Font color"><svg class="i14"><use href="#fontcol"/></svg></button><button class="c10" aria-label="Color options"><svg class="i6"><use href="#caret"/></svg></button>
          </div>
        </div>
        <div class="glabel"><span>Font</span><svg class="i8"><use href="#launch"/></svg></div>
      </div>
      <div class="group g-align">
        <div class="gbody rows">
          <div class="line">
            <button class="c17"><svg class="i12"><use href="#v-t"/></svg></button><button class="c17"><svg class="i12"><use href="#v-m"/></svg></button><button class="c17 sel"><svg class="i12"><use href="#v-b"/></svg></button><i class="sep"></i>
            <button class="c17" aria-label="Orientation"><svg class="i14" viewBox="0 0 14 14"><g fill="none" stroke="#444" transform="rotate(-40 5 7)"><circle cx="2.500" cy="7" r="2"/><path d="M4.500 4.500v5M6.500 2.500v7"/><circle cx="8.500" cy="7" r="2"/></g><path d="m6 13 7-8M13 8V5h-3" fill="none" stroke="#777"/></svg></button><button class="c17 left"><svg class="i6"><use href="#caret"/></svg></button><i class="sep"></i>
            <button class="wide"><svg class="i12"><use href="#wrap"/></svg>Wrap Text</button>
          </div>
          <div class="line">
            <button class="c17"><svg class="i12"><use href="#al-l"/></svg></button><button class="c17"><svg class="i12"><use href="#al-c"/></svg></button><button class="c17"><svg class="i12"><use href="#al-r"/></svg></button><i class="sep"></i>
            <button class="c17"><svg class="i14"><use href="#ind-o"/></svg></button><button class="c17"><svg class="i14"><use href="#ind-i"/></svg></button><i class="sep"></i>
            <button class="wide"><svg class="i12"><use href="#merge"/></svg>Merge &amp; Center<svg class="i6 gapl"><use href="#caret"/></svg></button>
          </div>
        </div>
        <div class="glabel"><span>Alignment</span><svg class="i8"><use href="#launch"/></svg></div>
      </div>
      <div class="group g-num">
        <div class="gbody rows">
          <div class="line"><span class="combo num"><select aria-label="Number format"><option>General</option></select><svg class="i6"><use href="#caret"/></svg></span></div>
          <div class="line">
            <button class="c17 sym">$</button><button class="c10"><svg class="i6"><use href="#caret"/></svg></button><button class="c17 sym">%</button><button class="c17 sym"><b>’</b></button><i class="sep"></i>
            <button class="c17 dec"><span>←.0</span><span>.00</span></button><button class="c17 dec"><span>.00</span><span>→.0</span></button>
          </div>
        </div>
        <div class="glabel"><span>Number</span><svg class="i8"><use href="#launch"/></svg></div>
      </div>
      <div class="group g-styles">
        <div class="gbody">
          <button class="big"><svg class="i24"><use href="#cond"/></svg>Conditional<span>Formatting<svg class="i6"><use href="#caret"/></svg></span></button>
          <button class="big"><svg class="i24"><use href="#ftab"/></svg>Format as<span>Table<svg class="i6"><use href="#caret"/></svg></span></button>
          <button class="big"><svg class="i24"><use href="#cstyle"/></svg>Cell<span>Styles<svg class="i6"><use href="#caret"/></svg></span></button>
        </div>
        <div class="glabel"><span>Styles</span></div>
      </div>
      <div class="group g-cells">
        <div class="gbody">
          <button class="big"><svg class="i24"><use href="#cins"/></svg>Insert<svg class="i6"><use href="#caret"/></svg></button>
          <button class="big"><svg class="i24"><use href="#cdel"/></svg>Delete<svg class="i6"><use href="#caret"/></svg></button>
          <button class="big"><svg class="i24"><use href="#cfmt"/></svg>Format<svg class="i6"><use href="#caret"/></svg></button>
        </div>
        <div class="glabel"><span>Cells</span></div>
      </div>
      <div class="group g-edit">
        <div class="gbody">
          <div class="stack">
            <button><svg class="i12"><use href="#sigma"/></svg>AutoSum<svg class="i6 gapl"><use href="#caret"/></svg></button>
            <button><svg class="i12"><use href="#fill"/></svg>Fill<svg class="i6"><use href="#caret"/></svg></button>
            <button><svg class="i12"><use href="#eraser"/></svg>Clear<svg class="i6"><use href="#caret"/></svg></button>
          </div>
          <button class="big"><svg class="i24" viewBox="0 0 26 26"><path d="M2 11 6 1.500 10 11M3.500 8h5" fill="none" stroke="#3a78bd" stroke-width="1.600"/><path d="M2.500 15.500h7l-7 9h7.500" fill="none" stroke="#8d55b8" stroke-width="1.600"/><path d="M11 8h14l-5 7v8l-4-3v-5z" fill="#6b6b6b"/></svg>Sort &amp;<span>Filter<svg class="i6"><use href="#caret"/></svg></span></button>
          <button class="big"><svg class="i24"><use href="#find"/></svg>Find &amp;<span>Select<svg class="i6"><use href="#caret"/></svg></span></button>
        </div>
        <div class="glabel"><span>Editing</span></div>
      </div>
      <button class="collapse" aria-label="Collapse ribbon"><svg class="i8"><use href="#up"/></svg></button>
    </div>
    <div class="fbar">
      <div class="namebox"><input aria-label="Name box" value="P10"><svg class="i8"><use href="#caret"/></svg></div>
      <span class="grip">⋮</span>
      <div class="fx"><button aria-label="Cancel"><svg class="i10"><use href="#x"/></svg></button><button aria-label="Enter"><svg class="i10"><use href="#check"/></svg></button><button class="fxi">fx</button></div>
      <div class="formula"><input aria-label="Formula" value="NZAU Discussion about new tagging"><svg class="i8"><use href="#down"/></svg></div>
    </div>
    <div class="grid">
      <table>
        <colgroup><col class="w16"><col class="w57"><col class="w55"><col class="w50"><col class="w49"><col class="w88"><col class="w49"><col class="w50"><col class="w49"><col class="w64"><col><col class="w47"><col class="w61"><col class="w49"><col class="w49"><col class="w49"></colgroup>
        <thead id="letters"></thead>
        <tbody id="cells"></tbody>
      </table>
      <div class="vscroll"><button aria-label="Scroll up"><svg class="i6 flip"><use href="#caret"/></svg></button><span class="thumb"></span><button class="bottom" aria-label="Scroll down"><svg class="i6"><use href="#caret"/></svg></button></div>
      <svg class="cursor"><use href="#cross"/></svg>
    </div>
    <div class="sheets">
      <span class="arrows"><i>◂</i><i>▸</i></span>
      <button class="sheet">Sheet1</button>
      <button class="addsheet" aria-label="New sheet"><svg class="i14"><use href="#addc"/></svg></button>
      <span class="grip">⋮</span>
      <div class="hscroll"><button aria-label="Scroll left">◂</button><span class="hthumb"></span></div>
    </div>
    <div class="status">
      <span>Ready</span>
      <div class="views">
        <button class="sel" aria-label="Normal"><svg class="i12"><use href="#vgrid"/></svg></button><button aria-label="Page layout"><svg class="i12"><use href="#vpage"/></svg></button><button aria-label="Page break"><svg class="i12"><use href="#vbreak"/></svg></button>
        <b>–</b><span class="slider"></span><b>+</b><span class="pct">100%</span>
      </div>
    </div>
    <div class="itask">
      <div class="iapps">
        <button><svg class="i12"><use href="#win"/></svg></button><button><svg class="i12"><use href="#search"/></svg></button><button><svg class="i16"><use href="#garena"/></svg></button><button><svg class="i18"><use href="#chrome"/></svg></button><button><svg class="i16"><use href="#word13"/></svg></button><button><svg class="i18"><use href="#valo"/></svg></button><button><svg class="i18"><use href="#discord"/></svg></button><button><svg class="i18"><use href="#flameA"/></svg></button><button><svg class="i18"><use href="#outlook"/></svg></button><button><svg class="i18"><use href="#folder"/></svg></button><button><svg class="i18"><use href="#notepad"/></svg></button><button><svg class="i18"><use href="#wordpad"/></svg></button><button><svg class="i18"><use href="#teams"/></svg></button><button><svg class="i16"><use href="#player"/></svg></button><button><svg class="i18"><use href="#paint"/></svg></button><button class="on"><svg class="i16"><use href="#excel13"/></svg></button>
      </div>
      <div class="itray">
        <svg class="i12"><use href="#t-v"/></svg><svg class="i12"><use href="#outlook"/></svg><svg class="i12"><use href="#t-mon"/></svg><svg class="i12"><use href="#t-swirl"/></svg><svg class="i12"><use href="#t-globe"/></svg><svg class="i12"><use href="#t-mcafee"/></svg><svg class="i12"><use href="#t-snip"/></svg><svg class="i12"><use href="#teams"/></svg><svg class="i12"><use href="#t-pen"/></svg><svg class="i12"><use href="#t-nv"/></svg><svg class="i12"><use href="#t-ad"/></svg><svg class="i14"><use href="#net"/></svg><svg class="i14"><use href="#spk"/></svg>
      </div>
      <div class="iclock">5:59 PM<br>7/12/2021</div>
    </div>
    <aside class="pip">
      <div class="pip-head"><span>Darvyn and 7 others</span><time>07:33:40</time><button aria-label="Minimize call"><svg class="i10"><use href="#min"/></svg></button></div>
      <div class="pip-av">RB</div>
      <div class="pip-ctl"><button aria-label="Camera"><svg class="i14"><use href="#camoff"/></svg></button><button aria-label="Mute"><svg class="i14"><use href="#micf"/></svg></button><button aria-label="Stop sharing"><svg class="i14"><use href="#stopsh"/></svg></button><button class="end" aria-label="Leave"><svg class="i14"><use href="#hang"/></svg></button></div>
    </aside>
  </section>
</main>

<section class="people">
  <div class="quiet"><span class="av dm">DM</span><span class="av jm">JM</span><span class="av vv">VV</span><span class="av jr">JR</span></div>
  <div class="tile talk"><span class="av jv">JV</span></div>
  <div class="tile talk"><span class="av rb">RB</span></div>
  <div class="tile talk"><span class="av rd">RD</span></div>
  <div class="tile last"><span class="av ja">JA</span></div>
</section>

<footer class="taskbar">
  <button class="start" aria-label="Start"><svg class="i16"><use href="#win"/></svg></button>
  <label class="tsearch"><svg class="i18"><use href="#search"/></svg><input placeholder="Type here to search"></label>
  <button class="wide48" aria-label="Cortana"><svg class="i18"><use href="#ring"/></svg></button>
  <button class="wide48" aria-label="Task view"><svg class="i18"><use href="#tview"/></svg></button>
  <div class="apps">
    <button class="on"><svg class="i24"><use href="#edge"/></svg></button><button><svg class="i24"><use href="#folder"/></svg></button><button><svg class="i24"><use href="#notepad"/></svg></button><button><svg class="i20"><use href="#gear"/></svg></button><button><svg class="i24"><use href="#vscode"/></svg></button><button><svg class="i24"><use href="#xampp"/></svg></button><button><svg class="i24"><use href="#teams"/></svg></button><button><svg class="i24"><use href="#photos"/></svg></button><button><svg class="i24"><use href="#zoom"/></svg></button><button><svg class="i24"><use href="#wordpad"/></svg></button><button><svg class="i22"><use href="#outlook13"/></svg></button><button><svg class="i24"><use href="#word"/></svg></button><button><svg class="i24"><use href="#excel"/></svg></button><button><svg class="i22"><use href="#chrome"/></svg></button><button><svg class="i24"><use href="#npp"/></svg></button><button><svg class="i24"><use href="#paint"/></svg></button><button><svg class="i22"><use href="#excel13"/></svg></button>
  </div>
  <div class="tray">
    <button class="weather"><svg class="i24"><use href="#storm"/></svg>30°C</button>
    <svg class="i14"><use href="#up"/></svg><svg class="i16"><use href="#micf"/></svg><svg class="i18"><use href="#net"/></svg><svg class="i18"><use href="#spk"/></svg>
    <div class="clock">6:00 PM<br>7/12/2021</div>
    <button class="nbtn" aria-label="Notifications"><svg class="i24" viewBox="0 0 26 24"><path d="M1 1h18v14H9l-4 4v-4H1z" fill="#fff"/><path d="M4 5h12M4 8h12M4 11h8" stroke="#333"/><circle cx="18" cy="15.500" r="7.500" fill="#2c2c34" stroke="#888"/><text x="15" y="20" class="count">2</text></svg></button>
  </div>
</footer>
<script src="app.js"></script>
</body>
</html>
```
FILE: styles.css
```css
* { box-sizing: border-box; }
body { margin: 0; height: 100vh; display: flex; flex-direction: column; overflow: hidden; background: #000; font-family: "Open Sans", "Noto Sans", sans-serif; font-size: 14px; color: #222; }
button { border: 0; padding: 0; margin: 0; background: none; font: inherit; color: inherit; display: flex; align-items: center; justify-content: center; white-space: nowrap; }
input, select { border: 0; padding: 0; margin: 0; background: none; font: inherit; color: inherit; outline: 0; min-width: 0; }
select { appearance: none; flex: 1; }
svg { flex: none; display: block; }
.defs { position: absolute; width: 0; height: 0; }
.i6 { width: 6px; height: 6px; } .i8 { width: 8px; height: 8px; } .i10 { width: 10px; height: 10px; }
.i12 { width: 12px; height: 12px; } .i14 { width: 14px; height: 14px; } .i16 { width: 16px; height: 16px; }
.i18 { width: 18px; height: 18px; } .i20 { width: 20px; height: 20px; } .i22 { width: 22px; height: 22px; } .i24 { width: 24px; height: 24px; }
.pma { font-size: 7px; font-weight: 700; font-style: italic; fill: #34406e; }
.count { font-size: 12px; fill: #fff; }

/* browser tabs */
.tabs { flex: 0 0 32px; display: flex; background: #cdcdcd; }
.tabs-menu { width: 47px; }
.tablist { flex: 1; display: flex; min-width: 0; }
.tab { flex: 1 1 0; min-width: 0; justify-content: flex-start; gap: 9px; padding: 0 0 0 6px; margin: 8px 0; border-left: 1px solid #777; font-size: 12px; line-height: 16px; }
.tab span { -webkit-mask-image: linear-gradient(90deg, #000 24px, rgba(0, 0, 0, .3) 36px); mask-image: linear-gradient(90deg, #000 24px, rgba(0, 0, 0, .3) 36px); }
.tab.dim { color: #888; }
.tab.dim svg { opacity: .6; }
.tab .soft { color: #777; }
.tab.active { margin: 0; border: 0; gap: 8px; background: #f7f7f7; border-radius: 6px 6px 0 0; }
.tab.active span { -webkit-mask-image: linear-gradient(90deg, #000, transparent 8px); mask-image: linear-gradient(90deg, #000, transparent 8px); }
.tab.active + .tab { border-color: transparent; }
.newtab { width: 36px; border-left: 1px solid #777; margin: 8px 0; }
.winctl { display: flex; width: 176px; justify-content: space-between; padding: 0 15px 4px 54px; }

.toolbar { flex: 0 0 38px; display: flex; align-items: center; background: #f7f7f7; border-bottom: 1px solid #ddd; }
.navbtns { display: flex; width: 144px; justify-content: space-between; padding: 0 18px; }
.off { color: #ccc; }
.url { flex: 1; min-width: 0; display: flex; align-items: center; gap: 13px; height: 30px; background: #fff; border-radius: 4px; padding: 0 6px 0 13px; color: #707070; }
.url button { width: 25px; }
.address { flex: 1; min-width: 0; margin: 0; white-space: nowrap; font-size: 13px; line-height: 20px; }
.address b { font-weight: 400; color: #111; }
.ext { width: 470px; display: flex; align-items: center; justify-content: space-between; padding: 0 6px; }
.ext button { width: 44px; }
.tbox { width: 16px; height: 16px; background: #5d5d5d; color: #fff; font-size: 12px; line-height: 16px; }
.vbar { width: 2px; height: 16px; background: #ccc; }

/* shared screen */
.stage { flex: 1; min-height: 0; display: flex; justify-content: center; background: #000; padding-top: 1px; }
.shared { position: relative; height: 100%; aspect-ratio: 16 / 10; border: 3px solid #d3342c; background: #e6e5e7; display: flex; flex-direction: column; font-size: 9px; line-height: 12px; }
.xl-title { flex: 0 0 23px; display: flex; align-items: center; background: #1e6c47; color: #fff; padding-bottom: 2px; }
.qat { width: 130px; padding-left: 13px; display: flex; gap: 9px; }
.qat button { gap: 2px; }
.faded { opacity: .3; }
.xl-title h1 { flex: 1; margin: 0; text-align: center; font-size: 9px; font-weight: 400; font-family: Roboto, sans-serif; }
.xl-ctl { width: 130px; display: flex; justify-content: space-between; padding-right: 9px; }
.xl-tabs { flex: 0 0 20px; display: grid; grid-template-columns: 46px 46px 44px 74px 60px 41px 50px 44px 66px 50px 1fr 40px 52px; background: #1e6c47; color: #fff; padding: 1px 8px 0 0; }
.xl-tabs .on { background: #f3f2f4; color: #1e6c47; }
.xl-tabs .tell { justify-content: flex-start; gap: 4px; padding-left: 7px; font-family: Roboto, sans-serif; }
.xl-tabs .share { background: #185a3a; gap: 3px; margin-left: 4px; }
.xl-tabs button:first-child { padding-right: 7px; }

.ribbon { flex: 0 0 72px; display: flex; background: #f2f1f3; border-bottom: 1px solid #d2d0d2; color: #444; font-family: Roboto, sans-serif; }
.group { display: flex; flex-direction: column; margin: 3px 0 0; border-right: 1px solid #d8d6d8; }
.gbody { flex: 1; display: flex; min-height: 0; }
.glabel { flex: 0 0 14px; display: flex; align-items: center; padding: 0 3px; color: #666; }
.glabel span { flex: 1; text-align: center; }
.g-clip { width: 119px; } .g-font { width: 160px; } .g-align { width: 203px; } .g-num { width: 109px; }
.g-styles { width: 140px; } .g-cells { width: 105px; } .g-edit { width: 144px; }
.big { flex-direction: column; justify-content: flex-start; flex: 1 1 0; padding-top: 3px; line-height: 12px; }
.big .i24 { margin-bottom: 2px; }
.big span { display: flex; align-items: center; gap: 2px; }
.g-styles .big:first-child { flex: 0 0 62px; }
.g-clip .big { flex: 0 0 32px; }
.g-cells .gbody { padding: 0 4px 0 3px; }
.muted { color: #999; }
.stack { display: flex; flex-direction: column; justify-content: space-around; align-items: flex-start; padding-left: 4px; }
.stack button { gap: 2px; height: 16px; }
.g-edit .stack { flex: 0 0 70px; }
.gapl { margin-left: 6px; }
.rows { flex-direction: column; padding: 3px 0 0 3px; gap: 5px; }
.line { display: flex; align-items: center; height: 20px; }
.combo { display: flex; align-items: center; height: 18px; border: 1px solid #bbb; background: #fff; padding: 0 2px; }
.fam { width: 86px; } .size { width: 34px; } .num { width: 101px; margin-left: 2px; }
.c10 { width: 10px; } .c17 { width: 17px; height: 18px; }
.c17 b { font-size: 10px; }
.dec { flex-direction: column; font-size: 7px; line-height: 7px; align-items: flex-end; font-weight: 700; }
.sep { width: 1px; height: 18px; margin: 0 4px; background: #d8d6d8; }
.left { justify-content: flex-start; }
.sel { background: #cbc9cb; }
.wide { gap: 2px; padding-left: 2px; }
.sym { font-size: 12px; }
.collapse { margin-left: auto; align-self: flex-end; padding: 0 5px 3px 0; }

.fbar { flex: 0 0 36px; display: flex; align-items: center; gap: 4px; padding: 0 2px; font-size: 10px; color: #444; }
.namebox, .fx, .formula { display: flex; align-items: center; height: 20px; background: #fff; border: 1px solid #d0ced0; padding: 0 4px; }
.namebox { width: 78px; }
.namebox input { flex: 1; }
.grip { width: 16px; text-align: center; color: #999; font-size: 11px; }
.fx { width: 84px; justify-content: space-between; padding: 0 8px; color: #bbb; }
.fxi { font-style: italic; color: #555; font-family: "Liberation Serif", serif; font-size: 12px; }
.formula { flex: 1; }
.formula input { flex: 1; padding-left: 3px; }

.grid { flex: 1; min-height: 0; display: flex; position: relative; }
.grid table { flex: 1; height: 100%; table-layout: fixed; border-collapse: collapse; background: #fff; font-family: Roboto, sans-serif; }
.w16 { width: 16px; } .w47 { width: 47px; } .w49 { width: 49px; } .w50 { width: 50px; } .w55 { width: 55px; } .w57 { width: 57px; } .w61 { width: 61px; } .w64 { width: 64px; } .w88 { width: 88px; }
.grid th { padding: 0; font-family: "Open Sans", sans-serif; font-weight: 400; font-size: 9px; line-height: 11px; background: #e6e5e7; color: #333; border-right: 1px solid #b5b3b5; white-space: nowrap; }
.grid thead th { height: 14px; font-size: 10px; border-bottom: 1px solid #999; }
.grid thead .cur { background: #cfcecf; border-bottom: 2px solid #1e6c47; color: #1e6c47; }
.grid tbody .cur { background: #cfcecf; color: #1e6c47; }
.grid td { padding: 0 2px 0 1px; font-size: 9px; line-height: 10px; white-space: nowrap; border: 1px solid #222; color: #222; }
.grid td.n { text-align: right; }
.grid td.free { border-color: #dcdcdc; }
.grid .head td { background: #fff200; font-family: Lato, sans-serif; font-weight: 700; text-align: center; padding: 0; }
.grid .head td.free { background: #fff; }
.grid .sum td { background: #d9d8d9; border-left-color: #d9d8d9; border-right-color: #d9d8d9; font-weight: 700; }
.grid .sum td.free { border-color: #d9d8d9; }
.grid .sum.short td.free { background: #fff; border-color: #dcdcdc; }
.grid .sum td.flag { background-image: linear-gradient(135deg, #1a7a35 3px, transparent 3px); }
.grid td.cell { outline: 2px solid #217346; outline-offset: -1px; }
.vscroll { width: 13px; display: flex; flex-direction: column; background: #d8d7d9; border-left: 1px solid #aaa; color: #666; }
.vscroll button { height: 12px; background: #fff; border: 1px solid #bbb; }
.vscroll .thumb { height: 14px; background: #fff; border: 1px solid #bbb; }
.vscroll .bottom { margin-top: auto; }
.flip { transform: rotate(180deg); }
.cursor { position: absolute; left: 634px; top: 139px; width: 14px; height: 14px; }

.sheets { flex: 0 0 21px; display: flex; align-items: center; border-bottom: 1px solid #ccc; }
.arrows { width: 74px; display: flex; justify-content: space-around; padding: 0 10px; color: #aaa; font-size: 8px; }
.sheet { width: 51px; height: 20px; background: #fff; border-bottom: 2px solid #1e6c47; color: #1e6c47; font-weight: 700; font-size: 9px; }
.addsheet { margin-left: 24px; margin-right: auto; }
.hscroll { width: 429px; display: flex; height: 12px; background: #d8d7d9; color: #555; }
.hscroll button { width: 12px; background: #fff; border: 1px solid #aaa; font-size: 8px; }
.hthumb { width: 200px; margin-left: 118px; background: #fff; border: 1px solid #aaa; }
.sheets .grip { margin-right: 2px; }
.status { flex: 0 0 18px; display: flex; align-items: center; justify-content: space-between; padding: 0 3px; background: #f0eff1; color: #555; font-family: Roboto, sans-serif; }
.views { display: flex; align-items: center; height: 18px; }
.views button { width: 29px; height: 18px; }
.views b { width: 16px; text-align: center; font-size: 11px; }
.slider { width: 76px; height: 8px; background: linear-gradient(90deg, transparent 36px, #555 36px, #555 39px, transparent 39px), linear-gradient(transparent 3px, #aaa 3px, #aaa 4px, transparent 4px); }
.pct { width: 28px; text-align: right; }

.itask { flex: 0 0 27px; display: flex; align-items: stretch; background: #0e0e10; color: #fff; }
.iapps { display: flex; flex: 1; }
.iapps button { width: 38px; padding-top: 2px; }
.iapps button:first-child { width: 34px; padding-right: 3px; }
.iapps .on { background: #2d2d2f; }
.itray { width: 240px; display: flex; align-items: center; justify-content: space-around; padding-top: 2px; }
.iclock { width: 50px; padding-top: 1px; text-align: center; font: 9px/13px Roboto, sans-serif; }

.pip { position: absolute; right: 10px; bottom: 40px; width: 216px; height: 123px; background: #141315; color: #fff; display: flex; flex-direction: column; align-items: center; }
.pip-head { align-self: stretch; display: flex; align-items: center; height: 28px; padding: 0 12px 0 9px; font-family: Roboto, sans-serif; font-size: 11px; }
.pip-head time { margin-left: 11px; font-size: 9px; }
.pip-head button { margin-left: auto; }
.pip-av { width: 48px; height: 48px; margin: 3px 0 9px; border-radius: 50%; background: #eccdd2; color: #5a2030; font-size: 18px; line-height: 48px; font-weight: 600; text-align: center; }
.pip-ctl { display: flex; width: 111px; height: 27px; background: #303032; }
.pip-ctl button { flex: 1; }
.pip-ctl .end { background: #a83242; }

/* participants */
.people { flex: 0 0 94px; display: grid; grid-template-columns: 4fr 1fr 1fr 1fr 1fr; background: #1b1a1a; }
.quiet { display: flex; justify-content: flex-end; align-items: center; gap: 42px; padding-right: 21px; }
.tile { display: flex; align-items: center; justify-content: center; }
.talk { background: radial-gradient(circle, #56547f 20px, #47466a 36px, #403e55 60px, #3b3947 86px); }
.last { background: #302e2e; }
.av { width: 42px; height: 42px; border-radius: 50%; text-align: center; line-height: 42px; font-size: 16px; font-weight: 600; }
.tile .av { width: 44px; height: 44px; line-height: 44px; }
.talk .av { box-shadow: 0 0 0 2px #29283a, 0 0 0 5px #9ea2ff; }
.dm { background: #e8cdd0; color: #6e2530; } .jm { background: #cddceb; color: #1f4468; } .vv { background: #d0dcde; color: #355058; } .jr { background: #cfeedd; color: #236a3c; }
.jv { background: #e8dddb; color: #5c4038; } .rb { background: #e6cbd0; color: #6e2035; } .rd { background: #faebcc; color: #806010; } .ja { background: #e3dff0; color: #4a4268; }

/* taskbar */
.taskbar { flex: 0 0 40px; display: flex; align-items: stretch; background: linear-gradient(90deg, #202020 50%, #24261c 72%, #484848 84%, #35353a 92%, #242858); color: #fff; }
.start { width: 48px; }
.tsearch { flex: 1; display: flex; align-items: center; gap: 10px; padding-left: 11px; background: #f1f1f1; border: 1px solid #ccc; color: #222; }
.tsearch input { flex: 1; font-size: 14px; }
.tsearch input::placeholder { color: #333; opacity: 1; }
.wide48 { width: 49px; }
.apps { width: 638px; display: flex; }
.apps button { flex: 1; border-bottom: 3px solid #76b9ed; margin: 0 4px; padding-top: 2px; }
.apps .on { background: #505050; margin: 0; }
.tray { width: 312px; display: flex; align-items: center; gap: 8px; padding-left: 26px; }
.weather { gap: 7px; margin-right: 8px; font-size: 14px; }
.clock { width: 56px; margin-left: -1px; text-align: center; font-size: 12px; line-height: 18px; white-space: nowrap; }
.nbtn { margin-left: 3px; }
```
FILE: app.js
```js
const letters = ['', 'G', 'H', 'I', 'J', 'K', 'L', 'M', 'N', 'O', 'P', 'Q', 'R', 'S', 'T', 'U'];
const titles = ['Measure', 'Timefile', 'Time Start', 'Time End', 'Time Elapsed (Hours)', 'Quantity', 'Records', 'Status', 'Product Details', 'Remarks', 'Work Type', 'Finance Status'];
const conv = 'Start of Conversion table to clause / Removing of LP text to P Ptext';
const x = 'no xref';
// measure, date, start, end, elapsed, status, remarks
const rows = [
  ['', '7/3/2021', '8:00', '12:00', '4.00', '', 'LN AUNZ Precedents Training'],
  ['', '7/3/2021', '12:00', '13:00', '1.00'],
  ['4 Pages', '7/3/2021', '13:00', '14:45', '1.75', x],
  ['3 Pages', '7/3/2021', '14:45', '16:00', '1.25'],
  { sum: '8.00', short: true },
  [],
  ['3 pages', '7/5/2021', '10:00', '12:00', '2.00', x],
  ['', '7/5/2021', '12:00', '13:00', '1.00'],
  ['', '7/5/2021', '13:00', '14:00', '1.00', '', 'NZAU Discussion about new tagging'],
  ['7 pages', '7/5/2021', '14:00', '16:30', '2.50', x],
  ['4 pages', '7/5/2021', '16:30', '18:00', '1.50', x],
  [],
  [],
  { sum: '8.00' },
  ['3 Pages', '7/6/2021', '10:00', '11:00', '1:00', x],
  ['3 Pages', '7/6/2021', '11:00', '12:00', '1:00', x, 'Pending (query) due to tags'],
  ['', '7/6/2021', '12:00', '13:00', '1:00'],
  ['4 Pages', '7/6/2021', '13:00', '14:00', '1:00', x],
  ['4 Pages', '7/6/2021', '14:00', '15:45', '1:45', x],
  ['3 Pages', '7/6/2021', '15:45', '16:54', '1:09', x],
  ['3 Pages', '7/6/2021', '16:54', '18:00', '1:06', x],
  ['', '', '', '', '0:00'],
  { sum: '8:00', flag: true },
  ['4 Pages', '7/7/2021', '10:00', '11:15', '1:15', x],
  ['3 Pages', '7/7/2021', '11:15', '12:15', '1:00', x],
  ['', '7/7/2021', '12:15', '13:15', '1:00'],
  ['3 Pages', '7/7/2021', '13:15', '14:00', '0:45', x],
  ['10 Pages', '7/7/2021', '14:00', '16:30', '2:30', x],
  ['7 Pages', '7/7/2021', '16:30', '18:00', '1:30', x],
  ['', '', '', '', '0:00'],
  { sum: '8:00', flag: true },
  ['7 Pages', '7/8/2021', '10:00', '12:00', '2:00', x],
  ['', '7/8/2021', '12:00', '13:00', '1:00', x],
  ['7 Pages', '7/8/2021', '13:00', '14:00', '1:00', x, conv],
  ['7 Pages', '7/8/2021', '14:00', '15:00', '1:00', x, conv],
  ['10 Pages', '7/8/2021', '15:00', '16:30', '1:30', x, conv]
];

document.getElementById('letters').innerHTML = '<tr>' + letters.map(l =>
  `<th class="${l === 'P' ? 'cur' : ''}">${l}</th>`).join('') + '</tr>';

const free = '<td class="free"></td>'.repeat(3);
let html = '<tr class="head"><th>1</th>' + titles.map(t => `<td>${t}</td>`).join('') + free + '</tr>';
rows.forEach((r, i) => {
  const n = i + 2;
  const isSum = !Array.isArray(r);
  const c = new Array(12).fill('');
  if (isSum) {
    c[4] = r.sum;
  } else {
    for (let k = 0; k < 5; k++) c[k] = r[k] || '';
    c[7] = r[5] || '';
    c[9] = r[6] || '';
  }
  const rowClass = isSum ? 'sum' + (r.short ? ' short' : '') : '';
  html += `<tr class="${rowClass}"><th class="${n === 10 ? 'cur' : ''}">${n}</th>`;
  c.forEach((v, k) => {
    let cls = k > 0 && k < 5 ? 'n' : '';
    if (isSum && r.flag && k === 4) cls += ' flag';
    if (n === 10 && k === 9) cls += ' cell';
    html += `<td class="${cls}">${v}</td>`;
  });
  html += free + '</tr>';
});
document.getElementById('cells').innerHTML = html;
```
